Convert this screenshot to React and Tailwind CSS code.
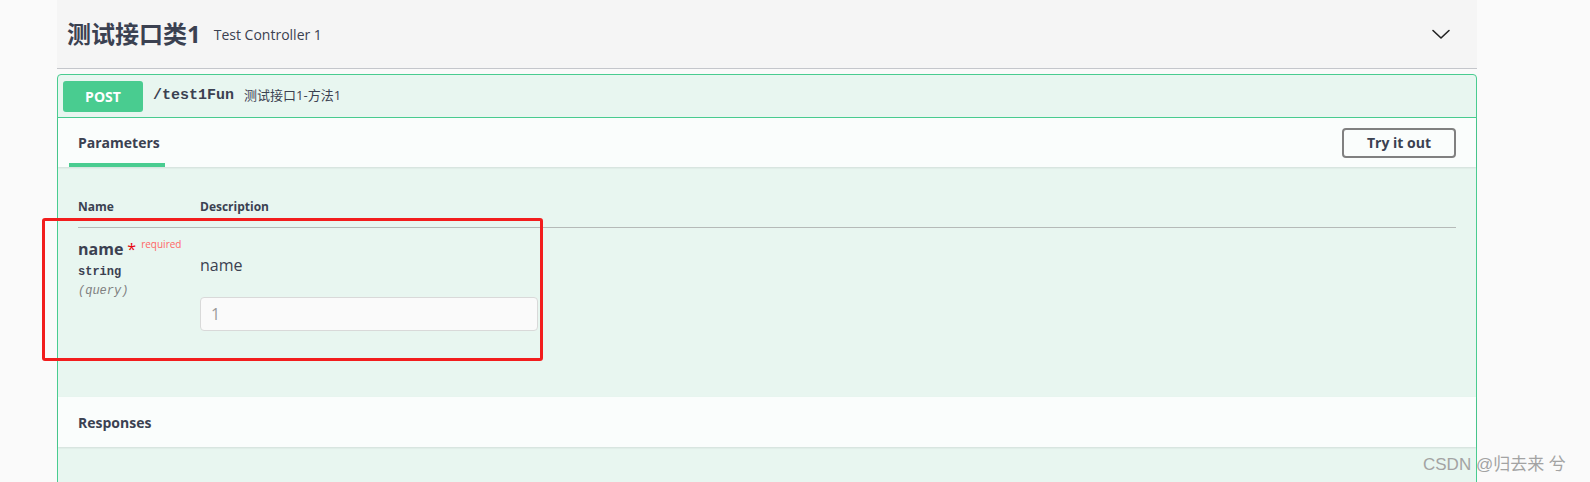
import React from 'react';

const sans = "font-['Open_Sans','Noto_Sans_CJK_SC',sans-serif]";

function Chevron() {
  return (
    <svg width="20" height="20" viewBox="0 0 20 20" className="text-[#222]">
      <path d="M2 6.5 L10 14 L18 6.5" fill="none" stroke="currentColor" strokeWidth="1.6" strokeLinecap="round" strokeLinejoin="round" />
    </svg>
  );
}

function TagHeader() {
  return (
    <div className="h-[69px] flex items-center justify-between bg-[#f5f5f5] border-b border-[#c4c6cb] pl-[10px] pr-[26px]">
      <div className="flex items-center">
        <span className="text-[24px] font-bold text-[#3b4151] leading-none">测试接口类1</span>
        <span className="ml-[13px] text-[14px] text-[#3b4151] mt-[1px]">Test Controller 1</span>
      </div>
      <Chevron />
    </div>
  );
}

function Summary() {
  return (
    <div className="flex items-center p-[5px] border-b border-[#49cc90] h-[43px]">
      <div className="w-[80px] h-[31px] rounded-[3px] bg-[#49cc90] flex items-center justify-center text-white text-[14px] font-bold">
        POST
      </div>
      <span className="ml-[10px] font-['Liberation_Mono',monospace] font-bold text-[15px] text-[#3b4151]">/test1Fun</span>
      <span className="ml-[10px] text-[13px] text-[#3b4151]">测试接口1-方法1</span>
    </div>
  );
}

function TabHeader() {
  return (
    <div className="h-[49px] bg-white/80 shadow-[0_1px_2px_rgba(0,0,0,0.1)] flex items-center justify-between pl-[11px] pr-[20px] relative">
      <div className="self-stretch flex flex-col">
        <div className="pt-[15px] px-[9px] text-[14px] leading-[20px] font-bold text-[#3b4151]">Parameters</div>
        <div className="mt-[10px] h-[4px] w-[96px] bg-[#49cc90]" />
      </div>
      <button className="w-[114px] h-[30px] rounded-[4px] border-2 border-[#808080] bg-transparent text-[14px] font-bold text-[#3b4151]">
        Try it out
      </button>
    </div>
  );
}

function Params() {
  return (
    <div className="px-[20px] pb-[66px]">
      <div className="flex pt-[32px] pb-[12px] border-b border-[#b5bab8] text-[12px] leading-[16px] font-bold text-[#3b4151]">
        <div className="w-[122px]">Name</div>
        <div>Description</div>
      </div>
      <div className="flex">
        <div className="w-[122px] pt-[11px]">
          <div className="flex items-start">
            <span className="text-[16px] leading-[20px] font-bold text-[#3b4151]">name</span>
            <span className="ml-[4px] text-[16px] leading-[20px] text-red-600">*</span>
            <span className="ml-[5px] -mt-[2px] text-[10px] text-[#ff6666]">required</span>
          </div>
          <div className="mt-[5px] font-['Liberation_Mono',monospace] font-bold text-[12px] leading-[16px] text-[#3b4151]">string</div>
          <div className="mt-[3px] font-['Liberation_Mono',monospace] italic text-[12px] leading-[16px] text-[#808080]">(query)</div>
        </div>
        <div className="pt-[27px]">
          <div className="text-[16px] leading-[20px] text-[#3b4151]">name</div>
          <input
            readOnly
            placeholder="1"
            className="mt-[22px] w-[338px] h-[34px] rounded-[4px] border border-[#d9d9d9] bg-[#fafafa] px-[10px] text-[16px] placeholder:text-[#9a9a9a]"
          />
        </div>
      </div>
    </div>
  );
}

function Responses() {
  return (
    <>
      <div className="h-[50px] bg-white/80 shadow-[0_1px_2px_rgba(0,0,0,0.1)] flex items-center px-[20px]">
        <span className="text-[14px] font-bold text-[#3b4151]">Responses</span>
      </div>
      <div className="px-[20px] pt-[29px] pb-[20px]">
        <span className="text-[12px] leading-[16px] font-bold text-[#3b4151]">Code</span>
      </div>
    </>
  );
}

export default function App() {
  return (
    <div className={`relative w-[1590px] h-[482px] overflow-hidden bg-[#fafafa] ${sans}`}>
      <div className="ml-[57px] w-[1420px]">
        <TagHeader />
        <div className="mt-[5px] rounded-[4px] border border-[#49cc90] bg-[#e8f6f0]">
          <Summary />
          <TabHeader />
          <Params />
          <Responses />
        </div>
      </div>

      {/* annotation box */}
      <div className="absolute left-[42px] top-[218px] w-[501px] h-[143px] border-[3px] border-[#f21d1d] rounded-[3px]" />

      {/* watermark */}
      <div className="absolute left-[1423px] top-[452px] text-[17px] text-[#a3a3a3] font-['Liberation_Sans','Noto_Sans_CJK_SC',sans-serif]">
        CSDN @归去来 兮
      </div>
    </div>
  );
}
